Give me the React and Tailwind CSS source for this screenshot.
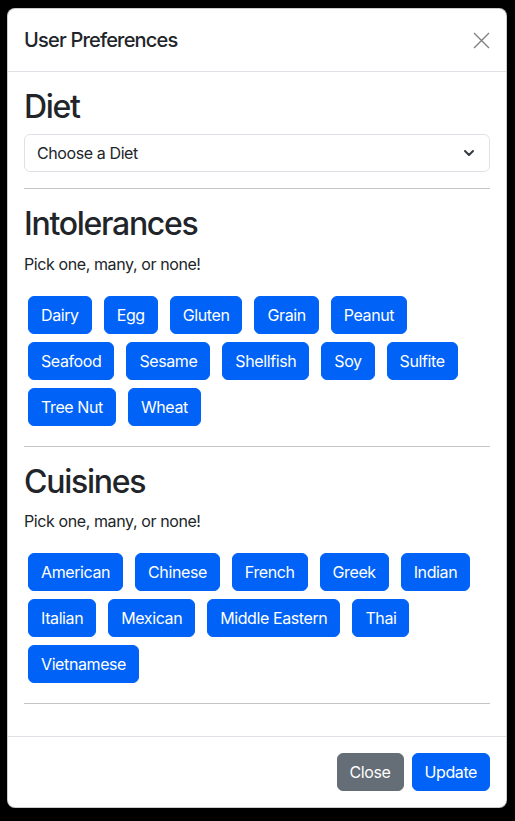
const intolerances = ["Dairy", "Egg", "Gluten", "Grain", "Peanut", "Seafood", "Sesame", "Shellfish", "Soy", "Sulfite", "Tree Nut", "Wheat"];
const cuisines = ["American", "Chinese", "French", "Greek", "Indian", "Italian", "Mexican", "Middle Eastern", "Thai", "Vietnamese"];

function Chip({ label }) {
  return (
    <button className="m-1 rounded-md border border-[#0062f7] bg-[#0062f7] px-3 py-1.5 text-base leading-6 text-white">
      {label}
    </button>
  );
}

function Section({ title, items }) {
  return (
    <div>
      <hr className="my-4 border-t border-[#c4c4c4]" />
      <h2 className="mb-2 text-[32px] font-medium leading-[1.2] tracking-[-0.04em]">{title}</h2>
      <p className="mb-4 text-base leading-6">Pick one, many, or none!</p>
      <div className="flex flex-wrap gap-x-1">
        {items.map((item) => (
          <Chip key={item} label={item} />
        ))}
      </div>
    </div>
  );
}

export default function App() {
  return (
    <div className="min-h-screen bg-black pt-2 font-['Inter',sans-serif] text-[#212529] tracking-[-0.025em]">
      <div className="ml-[7px] w-[500px] overflow-hidden rounded-lg border border-black/20 bg-white">
        {/* header */}
        <div className="flex items-center justify-between border-b border-[#dee2e6] px-4 py-4">
          <h5 className="text-xl font-medium leading-[30px] tracking-[-0.04em]">User Preferences</h5>
          <button className="text-[#808080]">
            <svg width="17" height="17" viewBox="0 0 17 17" fill="none" stroke="currentColor" strokeWidth="1.4">
              <path d="M1 1l15 15M16 1L1 16" />
            </svg>
          </button>
        </div>

        {/* body */}
        <div className="p-4">
          <h2 className="mb-2 text-[32px] font-medium leading-[1.2] tracking-[-0.04em]">Diet</h2>
          <div className="flex h-[38px] items-center justify-between rounded-md border border-[#dee2e6] pl-3 pr-3">
            <span className="text-base leading-6">Choose a Diet</span>
            <svg width="16" height="16" viewBox="0 0 16 16" fill="none" stroke="#343a40" strokeWidth="2" strokeLinecap="round" strokeLinejoin="round">
              <path d="M4 6l4 4 4-4" />
            </svg>
          </div>

          <Section title="Intolerances" items={intolerances} />
          <Section title="Cuisines" items={cuisines} />
          <hr className="my-4 border-t border-[#c4c4c4]" />
        </div>

        {/* footer */}
        <div className="flex justify-end border-t border-[#dee2e6] p-3">
          <button className="m-1 rounded-md border border-[#656d76] bg-[#656d76] px-3 py-1.5 text-base leading-6 text-white">Close</button>
          <button className="m-1 rounded-md border border-[#0062f7] bg-[#0062f7] px-3 py-1.5 text-base leading-6 text-white">Update</button>
        </div>
      </div>
    </div>
  );
}
